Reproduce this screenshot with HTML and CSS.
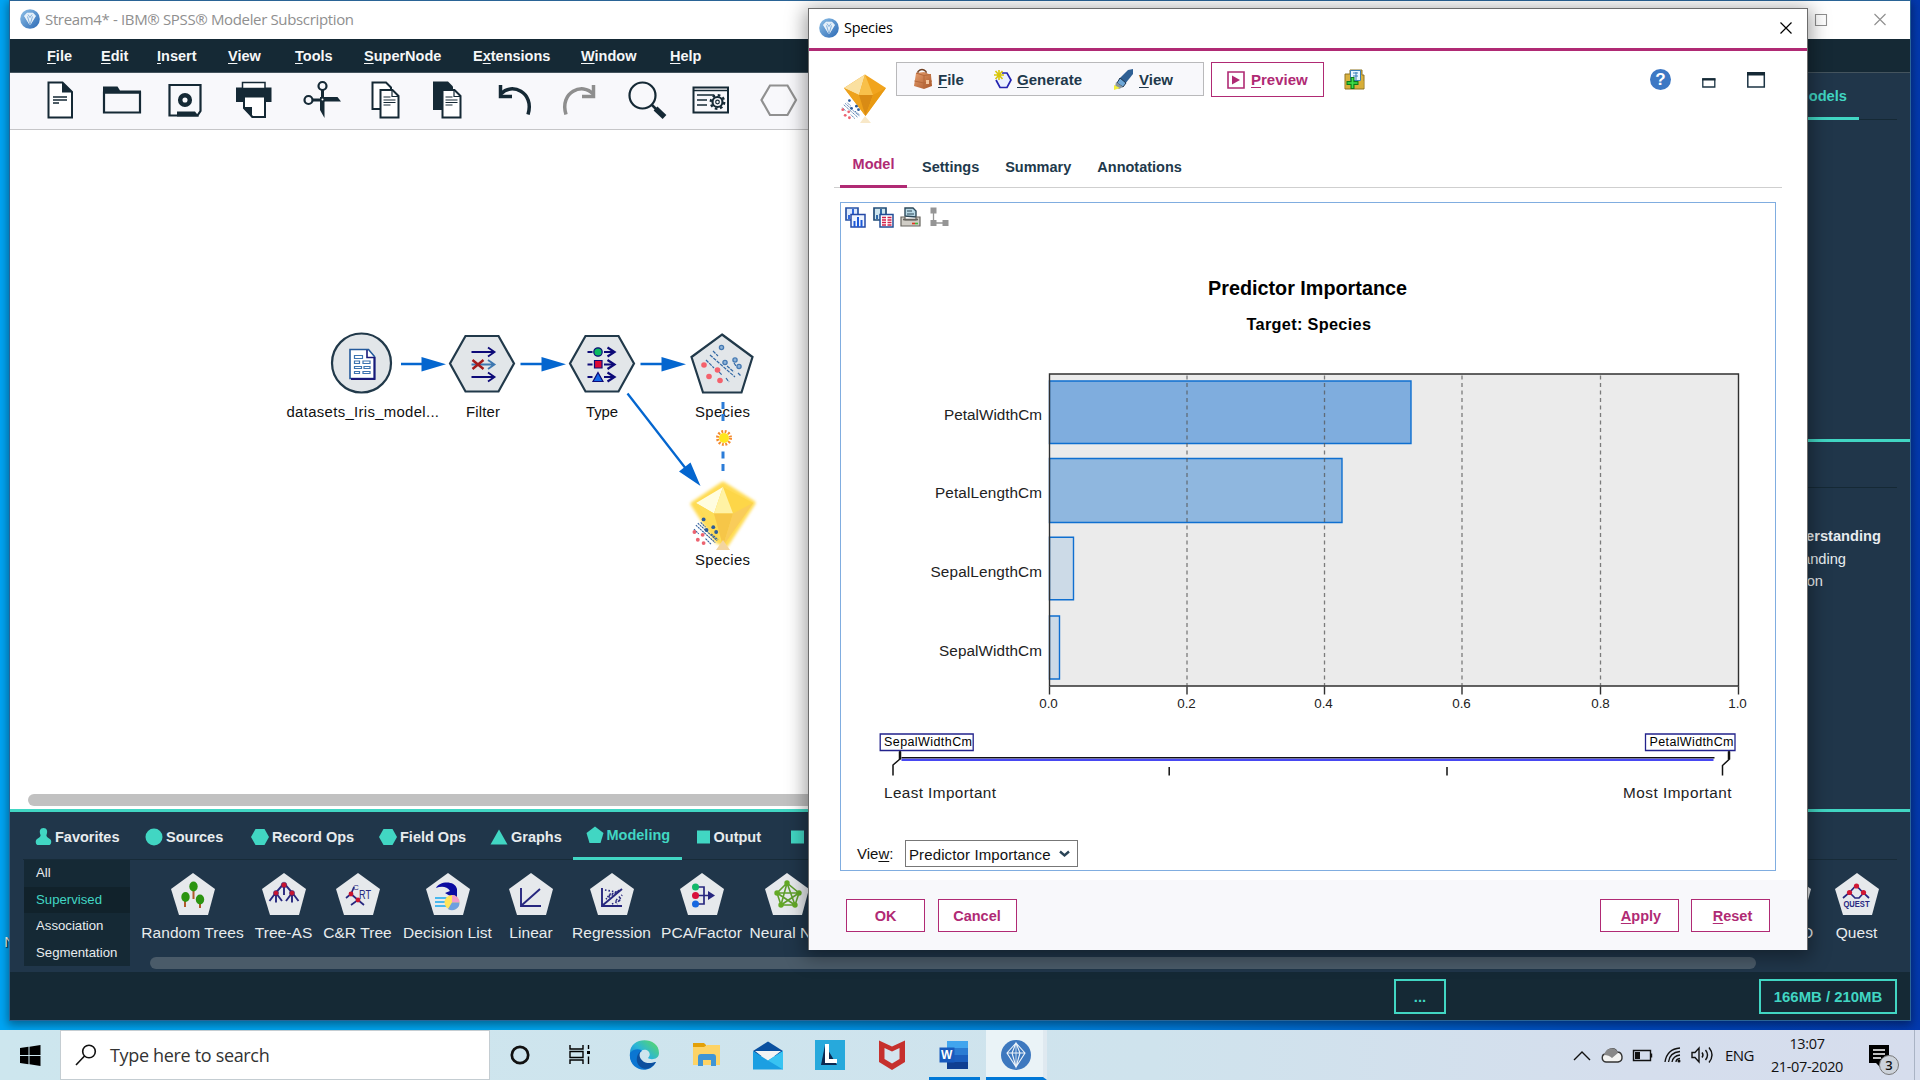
FILE: index.html
```html
<!DOCTYPE html>
<html lang="en">
<head>
<meta charset="utf-8">
<title>Stream4* - IBM SPSS Modeler Subscription</title>
<link rel="stylesheet" href="styles.css">
</head>
<body>
<svg class="defs" width="0" height="0" aria-hidden="true">
  <defs>
    <linearGradient id="logo-blue" x1="0" y1="0" x2="1" y2="1"><stop offset="0" stop-color="#8fc1e8"/><stop offset="1" stop-color="#2a68b4"/></linearGradient>
    <linearGradient id="edge-a" x1="0" y1="1" x2="1" y2="0"><stop offset="0" stop-color="#0c6fd0"/><stop offset=".5" stop-color="#2bb5d8"/><stop offset="1" stop-color="#5fdc5a"/></linearGradient>
    <linearGradient id="bag" x1="0" y1="0" x2="1" y2="1"><stop offset="0" stop-color="#e8a272"/><stop offset="1" stop-color="#a85426"/></linearGradient>
    <symbol id="app-logo" viewBox="0 0 20 20"><circle cx="10" cy="10" r="9.8" fill="url(#logo-blue)"/><path d="M4.500 7 7 4.200h6l2.500 2.800L10 16z" fill="#e3f0fa" stroke="#fff" stroke-width=".8"/><path d="M7.500 7.500 10 16l2.500-8.500M8 5.500l2 3 2-3" fill="none" stroke="#5b94cc" stroke-width=".7"/></symbol>
    <symbol id="pent" viewBox="0 0 44 42"><path d="M22 0 44 16 37 42H8L0 16z" fill="#e6e9ec"/></symbol>
    <symbol id="scatter" viewBox="0 0 30 30"><g fill="none" stroke="#2f5f9e" stroke-width="1.100" stroke-dasharray="2.200 .7"><path d="M4 9 24 27M9 6l5 5M20 18l7 6M2 13l5 5M14 23l6 6M6 7l20 18"/></g><g fill="#2c5c99"><circle cx="12" cy="3" r="2"/><circle cx="22" cy="11" r="2"/><circle cx="25" cy="16" r="2"/><circle cx="15" cy="14" r="2"/></g><g fill="#ec6370"><circle cx="2.500" cy="16" r="2"/><circle cx="11" cy="19" r="2"/><circle cx="6" cy="24" r="2"/><circle cx="12" cy="27.500" r="2"/></g></symbol>
  </defs>
</svg>

<div class="desktop-label">N</div>

<main class="window main-window">
  <header class="titlebar">
    <svg class="logo" width="20" height="20"><use href="#app-logo"/></svg>
    <span class="title-text">Stream4* - IBM® SPSS® Modeler Subscription</span>
    <svg class="win-controls" width="80" height="20" fill="none" stroke="#8f8f8f" stroke-width="1.100"><path d="M5.500 5.500h11v11h-11zM64.500 5l11 11M75.500 5l-11 11"/></svg>
  </header>
  <nav class="menubar">
    <span><u>F</u>ile</span><span><u>E</u>dit</span><span><u>I</u>nsert</span><span><u>V</u>iew</span><span><u>T</u>ools</span><span><u>S</u>uperNode</span><span>E<u>x</u>tensions</span><span><u>W</u>indow</span><span><u>H</u>elp</span>
  </nav>
  <div class="workspace">
    <section class="stream">
      <div class="toolbar">
        <svg viewBox="0 0 40 40"><path d="M8.500 2.500h14L32 12v25.500H8.500z" fill="#fff" stroke="#152935" stroke-width="2"/><path d="M22 2 32.500 12.500H22z" fill="#152935"/><path d="M13 17h14M13 20h14M13 23h6" stroke="#152935" stroke-width="1.300"/></svg>
        <svg viewBox="0 0 40 40"><path d="M2 12.500h36v20H2z" fill="none" stroke="#152935" stroke-width="2.200"/><path d="M1 6.500h14.500l2.500 4h21v3H1z" fill="#152935"/></svg>
        <svg viewBox="0 0 40 40"><path d="M4.500 5h31v26l-3 4.500H4.500z" fill="none" stroke="#152935" stroke-width="2.200"/><circle cx="20" cy="20" r="4.800" fill="none" stroke="#152935" stroke-width="4.500"/><path d="M12 31.500h18l4 5H12z" fill="#152935"/></svg>
        <svg viewBox="0 0 40 40"><path d="M2 7.500h35.500v14.500H31v-5H10v5H2z" fill="#152935"/><path d="M8.500 2.500h22.500v6H8.500z" fill="#fff" stroke="#152935" stroke-width="1.500"/><path d="M10 16.500h21v20.500H18.500L10 28z" fill="#fff" stroke="#152935" stroke-width="2"/><path d="M9.500 27h8.500v11z" fill="#152935"/></svg>
        <svg viewBox="0 0 40 40" fill="none" stroke="#152935"><circle cx="20.500" cy="6" r="4" stroke-width="2.200"/><circle cx="6.500" cy="20" r="4" stroke-width="2.200"/><path d="M20.500 10v12M10.500 20h12" stroke-width="3"/><path d="M18 17h17.500L39 21.500H22.500V38l-4.500-8z" fill="#152935" stroke="none"/><circle cx="20.500" cy="19.500" r="1" fill="#fff" stroke="none"/></svg>
        <svg viewBox="0 0 40 40"><path d="M7.500 2.500h13.500l5 5V29H7.500z" fill="#fff" stroke="#152935" stroke-width="2"/><path d="M15.500 10h12l6 6v21.500h-18z" fill="#fff" stroke="#152935" stroke-width="2"/><path d="M27 9.500v7h7M18.500 17h7M18.500 20h12M18.500 22.500h12M18.500 25h7" fill="none" stroke="#152935" stroke-width="1.200"/></svg>
        <svg viewBox="0 0 40 40"><path d="M6 1.500h15l5 5V30H6z" fill="#152935"/><path d="M15.500 10h12l6 6v21.500h-18z" fill="#fff" stroke="#152935" stroke-width="2"/><path d="M27 9.500v7h7M18.500 17h7M18.500 20h12M18.500 22.500h12M18.500 25h7" fill="none" stroke="#152935" stroke-width="1.200"/></svg>
        <svg viewBox="0 0 40 40" fill="none" stroke="#152935"><path d="M6 14C16 2 40 12 33 34.500" stroke-width="3.500"/><path d="M5.500 5v11.500H17" stroke-width="3.500"/></svg>
        <svg viewBox="0 0 40 40" fill="none" stroke="#8e8e8e"><path d="M34 14C24 2 0 12 7 34.500" stroke-width="3.500"/><path d="M34.500 5v11.500H23" stroke-width="3.500"/></svg>
        <svg viewBox="0 0 40 40" fill="none" stroke="#152935"><circle cx="15.500" cy="15.500" r="13" stroke-width="2.200"/><path d="m25 25 4 4" stroke-width="2.500"/><path d="m28.500 28.500 9 8.500" stroke-width="5.500"/></svg>
        <svg viewBox="0 0 40 40" fill="none" stroke="#152935"><path d="M2.500 7.500H37v25H2.500z" stroke-width="2"/><path d="M2.500 10.500H37M6 15h17M6 20h10M6 25h10" stroke-width="1.500"/><circle cx="26.500" cy="22" r="5" stroke-width="2.200"/><circle cx="26.500" cy="22" r="6.800" stroke-width="2.200" stroke-dasharray="2.670 2.670"/><circle cx="26.500" cy="22" r="1.800" stroke-width="1.200"/></svg>
        <svg viewBox="0 0 40 40" fill="none" stroke="#909090" stroke-width="2.200"><path d="M11 5.500h17.500L37 20l-8.500 15H11L2.500 20z"/></svg>
      </div>
      <svg class="canvas" width="1490" height="664" viewBox="10 130 1490 664">
        <g class="node-label">
          <text x="286.500" y="417" textLength="152.500">datasets_Iris_model...</text>
          <text x="466" y="417" textLength="34">Filter</text>
          <text x="586" y="417" textLength="32">Type</text>
          <text x="695" y="417" textLength="55">Species</text>
          <text x="695" y="564.500" textLength="55">Species</text>
        </g>
        <g fill="#e2e6e9" stroke="#21394a" stroke-width="2.200">
          <circle cx="361.500" cy="363" r="29.500"/>
          <path d="M465.500 336h33L514 363.500 498.500 391.500h-33L450 363.500z"/>
          <path d="M585.500 336h33L634 363.500 618.500 391.500h-33L570 363.500z"/>
          <path d="M722 334.500 752.500 357 741.500 392.500H703L691.500 357z"/>
        </g>
        <g fill="#0466cf" stroke="#0466cf">
          <path d="M401 364h24M520.500 364h24M640.500 364h24M627.500 393.500 690 474" fill="none" stroke-width="2.300"/>
          <path stroke="none" d="m421.500 357 24.500 7.300-24.500 7.200zM541.500 357l24.500 7.300-24.500 7.200zM661.500 357l24.500 7.300-24.500 7.200zM700.500 486l-21.500-14.500 11.500-9z"/>
          <path d="M723 402v7M723 414v7M723 451.500v7M723 464v7" stroke="#2b7cd8" stroke-width="3"/>
        </g>
        <g stroke-width="1.600" fill="none">
          <path d="M350 349.500h18.500l6 7V378.500H350z" fill="#fff" stroke="#245a9c"/><path d="M374.500 357v22H351" stroke="#1a1a7a" stroke-width="2"/><path d="M367 350v7.500h7" stroke="#1a1a7a"/>
          <path d="M354.500 355.500h8v3h-8zM354.500 361h5v2.500h-5zM363 361h7v2.500h-7zM354.500 366.500h7v2h-7zM364 366.500h6v2h-6zM354.500 371.500h5v2h-5zM363 371.500h7v2h-7z" stroke="#3d74b0" stroke-width="1.200"/>
        </g>
        <g fill="none" stroke="#0d0a78" stroke-width="1.800">
          <path d="M471.500 352h23M471.500 377h23M488 347.500l6.500 4.500-6.500 4.500M488 372.500l6.500 4.500-6.500 4.500"/>
          <path d="M471.500 364.500h23M488 360l6.500 4.500-6.500 4.500" stroke="#3d77b0"/><path d="m472.500 360 11 9m0-9-11 9" stroke="#a31a1a" stroke-width="2.400"/>
          <path d="M587.500 352h5M587.500 364.500h5M587.500 377h5M604 352h9M604 364.500h9M604 377h9"/><path d="m607.500 347.500 7 4.500-7 4.500M607.500 360l7 4.500-7 4.500M607.500 372.500l7 4.500-7 4.500" stroke-width="2.200"/>
          <g stroke-width="1.200"><circle cx="598" cy="352" r="4.200" fill="#0cba62"/><path d="M594.500 360.500h7.500v7.500h-7.500z" fill="#dc0834"/><path d="m598 372.500 5 9h-10z" fill="#1468e8"/></g>
        </g>
        <g fill="none" stroke="#3268a4" stroke-width="1.200" stroke-dasharray="3.500 1"><path d="m710 355 25 22M713 351l5 5M706 360l8 8M716 369l6 6M734 363l2 3M738 373l3 3M727 366l7 6M726 378l3 4"/></g>
        <g fill="#8fb4d8" stroke="#4478b2" stroke-width="1.300"><circle cx="721.500" cy="347.500" r="2.100"/><circle cx="735" cy="360" r="2.100"/><circle cx="725" cy="362.500" r="2.100"/><circle cx="739" cy="366.500" r="2.100"/></g>
        <g fill="#f4616c"><circle cx="704" cy="365" r="2.800"/><circle cx="717.500" cy="370" r="2.800"/><circle cx="709" cy="376.500" r="2.800"/><circle cx="720" cy="380.500" r="2.800"/></g>
        <circle cx="724" cy="438" r="6.500" fill="none" stroke="#f58a2c" stroke-width="3" stroke-dasharray="1.800 1.600"/><circle cx="724" cy="438" r="5" fill="#ffe620"/>
        <path class="gem-glow" d="M723 484 753 503 726 545 717 541 693 504z"/>
        <path d="M723 487 753 503 723 546 696 503z" fill="#fdd648"/><path d="M723 487 714 513.500 696 503z" fill="#fffde0"/><path d="M723 487 733 513.500H714z" fill="#fff2a4"/><path d="m714 513.500 9 32.500-27-43z" fill="#fddd58"/><path d="M714 513.500h19l-10 32.500z" fill="#f6c648"/><path d="M733 513.500 753 503l-30 43z" fill="#f9cc5a"/><path d="m723 540 7 10h-14z" fill="#f3d5a0"/>
        <use href="#scatter" x="692" y="516" width="29" height="30"/>
      </svg>
      <div class="hscroll"><i></i></div>
    </section>
    <aside class="managers">
      <div class="manager-tabs"><span>Models</span></div>
      <div class="project">
        <div class="project-rule"></div>
        <b>Understanding</b>
        <span class="p2">Understanding</span>
        <span class="p3">Preparation</span>
      </div>
    </aside>
  </div>
  <section class="palette">
    <div class="palette-tabs">
      <span><svg width="17" height="18" viewBox="0 0 17 18"><path d="M8.500 0C5 0 4 3 5.500 7 6 9 3 10 1.500 11.500 0 13 1 17 2.500 17h12c1.500 0 2.500-4 1-5.500C14 10 11 9 11.500 7 13 3 12 0 8.500 0z"/></svg>Favorites</span>
      <span><svg width="18" height="18"><circle cx="9" cy="9" r="8.500"/></svg>Sources</span>
      <span><svg width="18" height="18"><path d="M4.500 1h9L18 9l-4.500 8h-9L0 9z"/></svg>Record Ops</span>
      <span><svg width="18" height="18"><path d="M4.500 1h9L18 9l-4.500 8h-9L0 9z"/></svg>Field Ops</span>
      <span><svg width="18" height="18"><path d="M9 1.500 17.500 16.500H.5z"/></svg>Graphs</span>
      <span class="on"><svg width="18" height="18"><path d="m9 .5 8.500 6.500-3 10h-11L.5 7z"/></svg>Modeling</span>
      <span><svg width="15" height="18"><path d="M1 2.500h13v13H1z"/></svg>Output</span>
      <span><svg width="15" height="18"><path d="M1 2.500h13v13H1z"/></svg></span>
    </div>
    <div class="palette-body">
      <ul class="groups"><li>All</li><li class="sel">Supervised</li><li>Association</li><li>Segmentation</li></ul>
      <div class="nodes-wrap">
        <div class="nodes">
          <figure><svg viewBox="0 0 44 42"><use href="#pent"/><path d="M22.500 17v9M14 28v6M29 30v5" stroke="#b05b2a" stroke-width="2"/><g fill="#2b9410"><ellipse cx="22.500" cy="13.500" rx="4.200" ry="5"/><ellipse cx="14.500" cy="24" rx="4.200" ry="5"/><ellipse cx="29" cy="26.500" rx="4.200" ry="5"/></g></svg><figcaption>Random Trees</figcaption></figure>
          <figure><svg viewBox="0 0 44 42"><use href="#pent"/><path d="m7.500 28 6-8 7-8h3l7 8 6 8M14 20v9.500M14 20l6 8M22 12v10M30 20v9.500M30 20l-6 8" stroke="#27277f" stroke-width="1.900" fill="none"/><g fill="#c81430" stroke="#27277f" stroke-width=".5"><circle cx="22" cy="12" r="2.800"/><circle cx="14" cy="20" r="2.600"/><circle cx="30" cy="20" r="2.600"/></g></svg><figcaption>Tree-AS</figcaption></figure>
          <figure><svg viewBox="0 0 44 42"><use href="#pent"/><path d="m18 14-3 7-5 4M15 21l7 6-7 5M22 27l6 5" stroke="#27277f" stroke-width="1.700" fill="none"/><circle cx="15" cy="21" r="2.400" fill="#c81430"/><circle cx="22" cy="27" r="2.400" fill="#c81430"/><text class="glyph" x="17" y="16.500" font-size="8">C</text><text class="glyph" x="23" y="26" font-size="12.500" textLength="12" lengthAdjust="spacingAndGlyphs">RT</text></svg><figcaption>C&amp;R Tree</figcaption></figure>
          <figure><svg viewBox="0 0 44 42"><use href="#pent"/><path d="M10 15c3-7 19-8 21 1v11L19 20l5-2c-3-5-9-5-14-3z" fill="#0b0ba0"/><path d="M9 25h12M9 29h12M9 33h12" stroke="#49b8ee" stroke-width="2"/><circle cx="26" cy="29.500" r="7.500" fill="#ffe45a"/><path d="M26 29.500V22a7.500 7.500 0 0 1 7.500 7.500z" fill="#f39bc8"/><path d="M33.500 29.500A7.500 7.500 0 0 1 22 36l4-6.500z" fill="#6d9fe0"/></svg><figcaption>Decision List</figcaption></figure>
          <figure><svg viewBox="0 0 44 42"><use href="#pent"/><path d="M12 15v18h20M13 32l18-16" stroke="#27277f" stroke-width="1.900" fill="none"/></svg><figcaption>Linear</figcaption></figure>
          <figure><svg viewBox="0 0 44 42"><use href="#pent"/><path d="M12 15v18h20M13 32l19-16" stroke="#27277f" stroke-width="1.900" fill="none"/><path d="M15 17l11 2-8 4 12-6-14 9 6-7M22 31l9-4-6 1 7-6-5 9" stroke="#27277f" stroke-width="1.600" stroke-dasharray="1.500 2" fill="none"/></svg><figcaption>Regression</figcaption></figure>
          <figure><svg viewBox="0 0 44 42"><use href="#pent"/><path d="M15 14h9v17h-9M15 22.500h14" stroke="#27277f" stroke-width="1.700" fill="none"/><path d="m28 18 7 4.500-7 4.500z" fill="#27277f"/><circle cx="15.500" cy="14" r="3.500" fill="#12b86a"/><circle cx="15.500" cy="22.500" r="3.500" fill="#d8103c"/><circle cx="15.500" cy="31" r="3.500" fill="#1668e0"/></svg><figcaption>PCA/Factor</figcaption></figure>
          <figure><svg viewBox="0 0 44 42"><use href="#pent"/><path d="M22 10 12 20l4 12h14l4-12zM12 20h22L16 32M22 10l8 22M22 10l-6 22M12 20l18 12" stroke="#5f9f2c" stroke-width="1.600" fill="none"/><g fill="#63aa25"><circle cx="22" cy="10" r="2.700"/><circle cx="12" cy="20" r="2.700"/><circle cx="34" cy="20" r="2.700"/><circle cx="16" cy="32" r="2.700"/><circle cx="30" cy="32" r="2.700"/></g></svg><figcaption>Neural Net</figcaption></figure>
          <figure class="far"><svg viewBox="0 0 44 42"><use href="#pent"/></svg><figcaption>CHAID</figcaption></figure>
          <figure><svg viewBox="0 0 44 42"><use href="#pent"/><path d="m8 25 6.500-5.500 6.500-7 7 7 6 5.500M14.500 19.500l5.500 5.500h4l5-5.500" stroke="#27277f" stroke-width="1.700" fill="none"/><circle cx="21.500" cy="13" r="2.600" fill="#d01834"/><circle cx="14.500" cy="19.500" r="2.600" fill="#d01834"/><circle cx="28.500" cy="19.500" r="2.600" fill="#d01834"/><text class="glyph heavy" x="8.500" y="33.500" font-size="8.500" textLength="26" lengthAdjust="spacingAndGlyphs">QUEST</text></svg><figcaption>Quest</figcaption></figure>
        </div>
        <div class="nodes-scroll"></div>
      </div>
    </div>
  </section>
  <footer class="statusbar"><span class="box dots">...</span><span class="box mem">166MB / 210MB</span></footer>
</main>

<section class="window dialog">
  <header class="dialog-title">
    <svg width="20" height="20"><use href="#app-logo"/></svg><span>Species</span>
    <svg class="dialog-close" width="12" height="12" stroke="#000" stroke-width="1.200"><path d="M.5.500l11 11M11.500.5l-11 11"/></svg>
  </header>
  <div class="dialog-head">
    <svg class="gem" width="47" height="52" viewBox="841 73 47 52"><path d="M865 74.500 886 88 865.500 116 844 88z" fill="#f1a41e"/><path d="M865 74.500 859 95l-15-7z" fill="#fae0a0"/><path d="M865 74.500 873 95h-14z" fill="#f8c04a"/><path d="m859 95 6.500 21L844 88z" fill="#eea21c"/><path d="M859 95h14l-7.500 21z" fill="#d98b14"/><path d="m873 95 13-7-20.500 28z" fill="#e99a12"/><path d="m865 116 6 7h-11z" fill="#f8e8c8"/><use href="#scatter" x="841" y="98" width="21" height="22"/></svg>
    <div class="dialog-menu">
      <svg width="20" height="22" viewBox="0 0 20 22"><path d="M5 5V3.500q4-4 8 0V6" fill="none" stroke="#714022" stroke-width="1.400"/><path d="m3 5 8-1 7 3 1 11-8 3-10-3z" fill="url(#bag)"/><path d="m3 5 8 2.500V20M11 7.500l7-1M1.500 13l9.500 2 8-2" stroke="#b5683a" fill="none"/><path d="M13 12h3v4h-3z" fill="#f3c49c"/></svg><span class="m-file"><u>F</u>ile</span>
      <svg width="18" height="20" viewBox="0 0 18 20"><path d="M8 4h5l4 7-4 7.500H6L2 11" fill="#eaf0ff" stroke="#2424b0" stroke-width="1.700"/><path d="M5 1v10M0 6h10M1.500 2l7 8M8.500 2l-7 8" stroke="#d8c60c" stroke-width="1.600"/></svg><span class="m-gen"><u>G</u>enerate</span>
      <svg width="20" height="21" viewBox="0 0 20 21"><path d="m14 1 5-1v5l-8 10-6-5z" fill="#2e5f94"/><path d="m6 9 6 5-3 4-6-4z" fill="#6fa8d8" stroke="#1f3650"/><path d="m2 13 7 5-4 2-4-2z" fill="#8795a0"/><path d="m0 16 6 3-6 2z" fill="#f2ee38"/></svg><span><u>V</u>iew</span>
    </div>
    <div class="preview"><svg width="18" height="18"><path d="M1 1h16v16H1z" fill="none" stroke="#b02a74" stroke-width="1.600"/><path d="m5 4.500 8 4.500-8 4.500z" fill="#b02a74"/></svg><span><u>P</u>review</span></div>
    <svg class="publish" width="21" height="21"><path d="M1 5h5V1h12v5h2v14H1z" fill="#d9b13e" stroke="#8f7422"/><path d="M6.500 1.500h10v10h-10z" fill="#e9f5ff" stroke="#3a7eb8"/><path d="M9 4h5M9 7h5M12 3v9" stroke="#3a7eb8"/><path d="M1.500 12h18v7h-18z" fill="#d8ae38"/><path d="M8.500 8v12M2.500 14h12" stroke="#0c7c16" stroke-width="4"/><path d="M8.500 9v10M3.500 14h10" stroke="#3fe04c" stroke-width="1.700"/></svg>
    <div class="help">?</div>
    <svg class="head-controls" width="64" height="18"><path d="M.8 7h12v8H.8z" fill="#fff" stroke="#1c3444" stroke-width="1.300"/><path d="M.2 6.300h13.200v2.200H.2z" fill="#152935"/><path d="M45.800 1h16.500v14H45.800z" fill="#fff" stroke="#1c3444" stroke-width="1.500"/><path d="M45 0h18v3.500H45z" fill="#152935"/></svg>
  </div>
  <div class="tabs"><span class="on">Model</span><span>Settings</span><span>Summary</span><span>Annotations</span></div>
  <div class="panel">
    <div class="panel-tools">
      <svg width="21" height="21"><path d="M1 1h12v12H1z" fill="#dce9fc" stroke="#2954a6" stroke-width="1.700"/><path d="M4 12V8M8 8V2" stroke="#1d59d8" stroke-width="1.800"/><path d="M6 7.500h14V20H6z" fill="#eef4fe" stroke="#2449a6" stroke-width="1.500"/><path d="M9.500 20v-6M13 20V10M16.500 20v-7" stroke="#1d59d8" stroke-width="2"/></svg>
      <svg width="21" height="21"><path d="M1 1h12v12H1z" fill="#cfe6ee" stroke="#234d77" stroke-width="1.700"/><path d="M4 12V8M8 8V2" stroke="#1f5da0" stroke-width="1.800"/><path d="M7 7.500h13V20H7z" fill="#fff" stroke="#234d97" stroke-width="1.500"/><path d="M9 10.500h4M14.500 10.500h4M9 13h4M14.500 13h4M9 15.500h4M14.500 15.500h4M9 18h4M14.500 18h4" stroke="#d4204a" stroke-width="1.400"/></svg>
      <svg width="21" height="21"><path d="M5 9V1h8l3 3v6z" fill="#b8d9e6" stroke="#2c4858" stroke-width="1.400"/><path d="M7 4h5M7 7h7" stroke="#2c4858"/><path d="M1 10h4v3h11v-3h4v9H1z" fill="#d0cdc6" stroke="#66645e" stroke-width="1.200"/><path d="M3 12.500h15" stroke="#66645e" stroke-width="1.600"/><path d="M12 16.500h3" stroke="#e33420" stroke-width="1.600"/><path d="M15 16.500h3" stroke="#48b838" stroke-width="1.600"/></svg>
      <svg width="21" height="21" fill="#959595" stroke="#959595"><path d="M3.500 4v12M4 16h12" fill="none" stroke-width="1.300"/><path stroke="none" d="M.5.500h6V6.500h-6zM.5 13h6v6h-6zM12.500 13h6v6h-6z"/></svg>
    </div>
    <svg class="chart" width="933" height="600" viewBox="841.500 228.500 933 600">
      <text class="t1" x="1208.500" y="295.500" textLength="199">Predictor Importance</text>
      <text class="t2" x="1247" y="330" textLength="124.500">Target: Species</text>
      <path d="M1050 374.500h689v312h-689z" fill="#ebebeb"/>
      <g stroke="#0f6fd0" stroke-width="1.400">
        <path d="M1050 381.500h361.500V444H1050z" fill="#7fadde"/><path d="M1050 459h292.500v64H1050z" fill="#8fb7df"/><path d="M1050 537.700h24v62.600h-24z" fill="#ccdae7"/><path d="M1050 616.500h10v63h-10z" fill="#ccdae7"/>
      </g>
      <path d="M1187.500 376v310M1325 376v310M1462.500 376v310M1601 376v310" stroke="#555" stroke-opacity=".75" stroke-width="1.300" stroke-dasharray="4 3.500"/>
      <path d="M1050 374.500h689v312h-689z" fill="none" stroke="#303030" stroke-width="1.400"/>
      <path d="M1050 687v8M1187.500 687v8M1325 687v8M1462.500 687v8M1601 687v8M1739 687v8" stroke="#303030" stroke-width="1.400"/>
      <g class="cat"><text x="944.500" y="420.500" textLength="98">PetalWidthCm</text><text x="935.500" y="498" textLength="107">PetalLengthCm</text><text x="931" y="577" textLength="111.500">SepalLengthCm</text><text x="939.500" y="656" textLength="103">SepalWidthCm</text></g>
      <g class="tick"><text x="1049" y="708.500">0.0</text><text x="1187" y="708.500">0.2</text><text x="1324" y="708.500">0.4</text><text x="1462" y="708.500">0.6</text><text x="1601" y="708.500">0.8</text><text x="1738" y="708.500">1.0</text></g>
      <path d="M902 758.300h813" stroke="#111" stroke-width="1.500"/><path d="M902 760.300h812" stroke="#4848f2" stroke-width="2.200"/>
      <g fill="#fff" stroke="#22228c" stroke-width="1.300"><path d="M880.700 734.500h93v16.500h-93zM1646 734.500h89.500v16.500H1646z"/></g>
      <g class="tag"><text x="884.500" y="746.500" textLength="88">SepalWidthCm</text><text x="1650" y="746.500" textLength="84">PetalWidthCm</text></g>
      <g fill="none" stroke="#111" stroke-width="1.500"><path d="M900.500 751.500v8l-7 6V776M1729.500 751.500v8.500l-6.500 6V776M1169.700 767.500v8.500M1447.500 767.500v8.500"/><path d="M900.500 752v8M1729.500 752v8" stroke-width="2.500"/></g>
      <g class="cat"><text x="884.500" y="798.500" textLength="112">Least Important</text><text x="1623.500" y="798.500" textLength="108.500">Most Important</text></g>
    </svg>
    <div class="view-row"><label>Vie<u>w</u>:</label><div class="select">Predictor Importance<svg width="11" height="8"><path d="m1 1.500 4.500 4 4.500-4" fill="none" stroke="#2a4356" stroke-width="2.400"/></svg></div></div>
  </div>
  <footer class="dialog-foot"><button>OK</button><button>Cancel</button><button class="right"><u>A</u>pply</button><button class="nudge"><u>R</u>eset</button></footer>
</section>

<footer class="taskbar">
  <div class="start"><svg width="21" height="21" viewBox="0 0 21 21"><path d="m0 3 8.500-1.200v8.200H0zM9.500 1.700 20.500 0v10h-11zM0 11h8.500v8.200L0 18zM9.500 11h11v10l-11-1.700z"/></svg></div>
  <div class="search"><svg width="24" height="24" fill="none" stroke="#111" stroke-width="1.600"><circle cx="15" cy="8.500" r="6.300"/><path d="M10.500 13 2 22"/></svg><span>Type here to search</span></div>
  <div class="apps">
    <svg viewBox="0 0 30 30"><circle cx="15" cy="15" r="8.200" fill="none" stroke="#111" stroke-width="2.700"/></svg>
    <svg class="task-view" viewBox="0 0 30 30" fill="none" stroke="#000" stroke-width="1.400"><path d="M5 5v4h13V5M5 24v-4h13v4M5 11.500h13v6H5zM23.500 5v4M23.500 16.500V24"/><path d="M22 11h3v3h-3z" fill="#000" stroke="none"/></svg>
    <svg viewBox="0 0 30 30"><path d="M1 14C0-4 30-4 30 13c0 7-9 7-11 5 5-5-2-11-7-7C8 14 8 21 13 26 5 26 0 21 1 14z" fill="url(#edge-a)"/><path d="M1 13c4-5 11-4 12-2-6 3-4 13 6 13 4 0 7-2 8-2-7 14-28 8-26-9z" fill="#0b76d2"/><path d="M12 11c-4 5 1 13 10 12l5-1c-5 9-16 9-19 0-1-5 1-9 4-11z" fill="#0c4f9e"/></svg>
    <svg viewBox="0 0 30 30"><path d="M2 3h11l2 2v4H2z" fill="#e3a008"/><path d="M2 7h11l3-2h13v20H2z" fill="#fdd366"/><path d="M7 26V17q0-3 3-3h12q3 0 3 3v9h-5v-6h-8v6z" fill="#3f95d6"/></svg>
    <svg viewBox="0 0 30 30"><path d="m0 11 15-9.500L30 11l-5 5H5z" fill="#0a50a0"/><path d="M2 11h26L15 21z" fill="#f4f4f4"/><path d="M0 11l15 9.500L30 11v18.500H0z" fill="#1b9fe2"/><path d="M15 20.500 30 11v18.500z" fill="#38c3f2"/></svg>
    <svg viewBox="0 0 30 30"><path d="M0 0h30v30H0z" fill="#27a9dc"/><path d="M10 5 6 25h16z" fill="#0b2850"/><path d="M10 4h4v15h8v4H10z" fill="#fff"/></svg>
    <svg viewBox="0 0 30 30"><path d="m2 .5 13 6 13-6V22l-13 8-13-8z" fill="#c6302d"/><path d="m7.500 8 7.500 3.500L22.500 8v11L15 23.500 7.500 19z" fill="#d4e5ef"/></svg>
    <span class="running"><svg viewBox="0 0 30 30"><path d="M8 1h21v28H8z" fill="#1b5ebe"/><path d="M8 1h21v7H8z" fill="#41a5ee"/><path d="M8 8h21v7H8z" fill="#2b7cd3"/><path d="M8 22h21v7H8z" fill="#103f91"/><path d="M.5 7.500h15v15H.5z" fill="#185abd"/><text x="2" y="19" class="word">W</text></svg></span>
    <span class="running active"><svg viewBox="0 0 30 30"><circle cx="15" cy="15" r="15" fill="#3d78bf"/><path d="m15 3 9 10-9 14-9-14zM6 13h18M15 3l-4 10 4 14 4-14z" fill="none" stroke="#eef4fa" stroke-width="1.100"/><path d="M15 3v24" stroke="#eef4fa" stroke-width=".8"/></svg></span>
  </div>
  <div class="tray">
    <svg class="tray-icons" width="144" height="26" viewBox="1572 1043 144 26" fill="none" stroke="#111" stroke-width="1.400">
      <path d="m1574 1060 8-8 8 8"/>
      <path d="M1606 1062c-5-1-5-8 0-8 1-6 9-7 11-2 6 0 7 9 1 10z" fill="#f4f4f2" stroke="#333"/><path d="M1604 1055c2-8 12-9 14-2l-6 5q-3-3-8-3z" fill="#888" stroke="none"/>
      <path d="M1633.500 1050.500h17v10h-17zM1651.500 1053.500v4"/><path d="M1635 1052h5v7h-5z" fill="#111" stroke="none"/>
      <g stroke-width="1.300"><path d="M1665 1062q2-13 15-14M1668.500 1062q1-9.500 11.500-10.500M1672 1062q1-6 8-7M1676 1062q0-3 4-3.500"/></g><circle cx="1679" cy="1061" r="1.500" fill="#111" stroke="none"/>
      <path d="M1692 1052.500h3l4-4.500v14l-4-4.500h-3zM1702 1052.500q2 2.500 0 5M1705.500 1050q4 5 0 10M1709 1047.500q6 7.500 0 15"/>
    </svg>
    <span class="lang">ENG</span>
    <div class="clock"><span>13:07</span><span>21-07-2020</span></div>
    <div class="notif"><svg width="22" height="24"><path d="M0 0h20v18h-8v5l-5-5H0z"/><path d="M4 5h12M4 9h12M4 13h8" stroke="#fff" stroke-width="1.300"/></svg><b>3</b></div>
    <i class="peek"></i>
  </div>
</footer>
</body>
</html>
```

FILE: styles.css
```css
* { box-sizing: border-box; }
body { margin: 0; width: 1920px; height: 1080px; overflow: hidden; position: relative; font-family: "Liberation Sans", Arial, sans-serif; font-size: 14.67px; background: linear-gradient(90deg, #00a5f4 0, #00a8f2 30%, #0078d8 62%, #0048bd 85%, #0339ae 100%); }
u { text-underline-offset: 2px; text-decoration-thickness: 1.3px; }
ul, figure { margin: 0; padding: 0; list-style: none; }
svg { display: block; flex: none; }
.defs { position: absolute; }
.window { position: absolute; display: flex; flex-direction: column; }
.desktop-label { position: absolute; left: 4px; top: 931px; color: #fff; font: 15px "Open Sans", sans-serif; text-shadow: 1px 1px 1px #000; }

/* main window */
.main-window { left: 10px; top: 1px; width: 1900px; height: 1019px; box-shadow: 0 0 0 1px #2a6496, 0 3px 9px 2px rgba(0, 0, 0, .4); }
.titlebar { height: 38px; flex: none; background: #fff; display: flex; align-items: center; padding: 0 20px 2px 10px; color: #8f8f8f; }
.title-text { margin-left: 5px; font: 15px "Open Sans", sans-serif; letter-spacing: -.35px; white-space: nowrap; }
.win-controls { margin-left: auto; margin-right: 0; }
.menubar { height: 34px; flex: none; background: #152935; color: #f5f7f8; font-size: 14.500px; font-weight: bold; display: grid; grid-template-columns: 54px 56px 71px 67px 69px 109px 108px 89px 60px; align-items: center; padding: 1px 0 0 37px; border-bottom: 1px solid #44545e; }
.workspace { display: flex; height: 736px; }
.stream { width: 1490px; background: #fff; display: flex; flex-direction: column; }
.toolbar { height: 57px; flex: none; background: #f8f8fb; border-bottom: 1px solid #c6c6c8; display: grid; grid-template-columns: 62.5px 63px 69px 68px 62.5px 62.5px 68px 64px 68px 63.5px 68.5px 40px; padding: 7px 0 0 29.500px; }
.toolbar svg { width: 40px; height: 40px; }
.canvas { flex: none; background: #fff; }
.node-label { font-size: 14.900px; fill: #111; }
.gem-glow { fill: #ffdb5c; stroke: #ffdb52; stroke-width: 5; stroke-linejoin: round; filter: blur(1.500px); }
.hscroll { padding: 0 0 0 18px; }
.hscroll i { display: block; height: 12px; border-radius: 6px; background: #c1c1c1; }
.managers { width: 410px; background: #20364a; color: #e8edf0; display: flex; flex-direction: column; }
.manager-tabs { height: 47px; margin: 0 13px; border-bottom: 1px solid #152935; display: flex; justify-content: flex-end; padding-right: 38px; }
.manager-tabs span { height: 47px; padding: 15px 12px 0; border-bottom: 3px solid #41d6c3; color: #41d6c3; font-weight: bold; line-height: 17px; }
.project { margin-top: 319px; border-top: 3px solid #41d6c3; display: flex; flex-direction: column; align-items: flex-end; flex: 1; line-height: 22.500px; }
.project-rule { height: 46px; width: 384px; margin-right: 13px; border-bottom: 1px solid #152935; }
.project b { margin: 37px 29px 0 0; }
.project .p2 { margin-right: 64px; }
.project .p3 { margin-right: 87px; }

/* node palette */
.palette { height: 163px; flex: none; background: #20364a; border-top: 3px solid #41d6c3; color: #e8ecee; }
.palette-tabs { height: 48px; margin: 0 13px; border-bottom: 1px solid #172b38; font-size: 14.500px; font-weight: bold; display: grid; grid-template-columns: 110px 106px 128px 111px 95.500px 110px 94px 30px; padding-left: 12px; }
.palette-tabs span { display: flex; align-items: flex-start; gap: 3px; padding-top: 16px; line-height: 18px; height: 48px; white-space: nowrap; }
.palette-tabs svg { fill: #41d6c3; }
.palette-tabs .on { color: #41d6c3; padding-top: 14px; padding-left: 13px; margin-left: -13px; width: 109px; border-bottom: 3px solid #41d6c3; }
.palette-body { display: flex; padding-left: 14px; }
.groups { width: 106px; height: 106px; flex: none; background: #152935; font-size: 13.200px; margin-top: 0; }
.groups li { height: 26.500px; line-height: 26.500px; padding-left: 12px; }
.groups .sel { background: #11222b; color: #41d6c3; }
.nodes-wrap { padding: 13px 0 0 5px; }
.nodes { display: grid; grid-template-columns: 115px 67px 81px 99px 68px 93px 87px 84px 995px 65px; height: 84px; font-size: 15.500px; }
.nodes figure { display: flex; flex-direction: column; align-items: center; }
.nodes .far { width: 70px; justify-self: end; }
.nodes svg { width: 44px; height: 42px; }
.nodes figcaption { margin-top: 8px; line-height: 20px; white-space: nowrap; letter-spacing: .07px; }
.glyph { fill: #27277f; font-family: "Liberation Sans", sans-serif; }
.heavy { font-weight: bold; }
.nodes-scroll { width: 1606px; height: 12px; border-radius: 6px; background: #4a5b69; margin-left: 15px; }
.statusbar { flex: 1; background: #152935; display: flex; align-items: flex-start; justify-content: flex-end; gap: 313px; padding: 7px 13px 0 0; }
.box { height: 35px; border: 2px solid #41d6c3; color: #41d6c3; font-weight: bold; font-size: 14.900px; line-height: 33px; text-align: center; }
.dots { width: 52px; }
.mem { width: 138px; white-space: nowrap; }

/* model dialog */
.dialog { left: 808px; top: 8px; width: 1000px; height: 942px; background: #fff; border: 1px solid #6c6c6c; border-bottom: 0; box-shadow: 0 4px 18px 3px rgba(0, 0, 0, .38); }
.dialog-title { height: 42px; flex: none; border-bottom: 3px solid #b02a74; display: flex; align-items: center; padding: 0 15px 2px 10px; font: 14.500px "Open Sans", sans-serif; letter-spacing: -.3px; color: #000; gap: 5px; }
.dialog-close { margin-left: auto; }
.dialog-head { height: 94px; flex: none; display: flex; align-items: flex-start; padding: 11px 41px 0 32px; color: #21394b; font-weight: bold; font-size: 15px; }
.gem { margin-top: 11px; }
.dialog-menu { width: 308px; height: 34px; margin-left: 8px; border: 1px solid #b9b9bb; background: #f8f8fb; display: flex; align-items: center; padding: 0 0 0 16px; }
.dialog-menu span { margin-left: 5px; width: 50px; }
.dialog-menu .m-file { width: 56px; }
.dialog-menu .m-gen { width: 97px; }
.preview { width: 113px; height: 35px; margin-left: 7px; border: 1.500px solid #b02a74; color: #b02a74; display: flex; align-items: center; gap: 6px; padding-left: 15px; }
.publish { margin: 7px 0 0 20px; }
.help { width: 21px; height: 21px; border-radius: 50%; background: #3d78c4; color: #fff; text-align: center; line-height: 22px; font-size: 17px; margin: 7px 31px 0 auto; }
.head-controls { margin-top: 10px; }
.tabs { height: 43px; flex: none; margin: 0 25px 0 25px; border-bottom: 1px solid #cfcfcf; display: flex; padding-left: 6px; color: #21394b; font-size: 14.500px; font-weight: bold; }
.tabs span { margin-left: 26px; line-height: 17px; padding-top: 14px; white-space: nowrap; }
.tabs .on { margin: 0 -11px 0 0; width: 67px; height: 43px; text-align: center; padding-top: 11px; color: #b02a74; border-bottom: 3px solid #b02a74; }
.panel { height: 669px; flex: none; margin: 14px 31px 0 31px; border: 1px solid #80ade0; }
.panel-tools { height: 25px; padding: 4px 0 0 4px; display: flex; gap: 6.500px; }
.panel-tools svg:last-child { margin-left: 2px; }
.chart { font-family: "Liberation Sans", sans-serif; fill: #222; }
.t1 { font-size: 19.800px; font-weight: bold; fill: #000; }
.t2 { font-size: 16.300px; font-weight: bold; fill: #000; }
.cat { font-size: 15.300px; }
.tick { font-size: 13.400px; text-anchor: middle; }
.tag { font-size: 12.500px; fill: #000; }
.view-row { display: flex; align-items: center; padding-left: 16px; height: 27px; margin-top: 12px; font-size: 15px; color: #111; }
.view-row label { width: 48px; }
.select { width: 173px; height: 27px; border: 1px solid #777; display: flex; align-items: center; gap: 8px; padding: 1px 0 0 3px; white-space: nowrap; letter-spacing: .12px; }
.dialog-foot { margin-top: auto; height: 70px; flex: none; background: #f8f8fb; display: flex; padding: 19px 37px 0 37px; gap: 12.500px; }
.dialog-foot button { width: 79px; height: 33px; border: 1.500px solid #b02a74; background: #fff; color: #b02a74; font: bold 14.500px "Liberation Sans", sans-serif; padding: 0; }
.dialog-foot .right { margin-left: auto; padding-left: 4px; }
.dialog-foot .nudge { padding-left: 4px; }

/* taskbar */
.taskbar { position: absolute; left: 0; top: 1030px; width: 1920px; height: 50px; display: flex; background: linear-gradient(90deg, #cde6ee 0, #cfe3ed 60%, #d5deed 85%, #d6dded 100%); font-family: "Open Sans", sans-serif; color: #111; }
.start { width: 60px; padding: 15px 0 0 20px; }
.search { width: 430px; height: 50px; background: #fff; border: 1px solid #c4cdd2; display: flex; align-items: center; padding-left: 13px; font-size: 18px; color: #333; }
.search span { margin-left: 12px; letter-spacing: -.33px; }
.apps { display: flex; align-items: flex-start; padding-left: 15px; gap: 32px; }
.apps svg { width: 30px; height: 30px; margin-top: 10px; }
.apps .task-view { margin-left: -2px; margin-right: 2px; }
.running { width: 51px; height: 50px; border-bottom: 3px solid #0078d7; padding-left: 10px; margin-left: -10px; }
.running svg { width: 30px; }
.active { background: #eaf3f7; margin-left: -26px; width: 61px; padding-left: 15px; border-right: 4px solid #dfe9f0; }
.word { font: bold 12px "Liberation Sans", sans-serif; fill: #fff; }
.tray { margin-left: auto; display: flex; align-items: flex-start; width: 348px; }
.tray-icons { margin-top: 13px; }
.lang { margin: 15px 0 0 9px; width: 44px; font-size: 15px; line-height: 20px; letter-spacing: -.6px; }
.clock { width: 76px; display: flex; flex-direction: column; align-items: center; font-size: 14.500px; line-height: 23px; padding-top: 2px; letter-spacing: -.35px; white-space: nowrap; }
.notif { margin: 15px 0 0 24px; position: relative; }
.notif b { position: absolute; left: 10px; top: 10px; width: 20px; height: 20px; border-radius: 50%; background: #ccd2da; border: 1px solid #777; font-size: 13px; line-height: 18px; text-align: center; font-weight: 600; }
.peek { width: 1px; height: 50px; background: #a9b3c4; margin-left: auto; margin-right: 5px; }
```
